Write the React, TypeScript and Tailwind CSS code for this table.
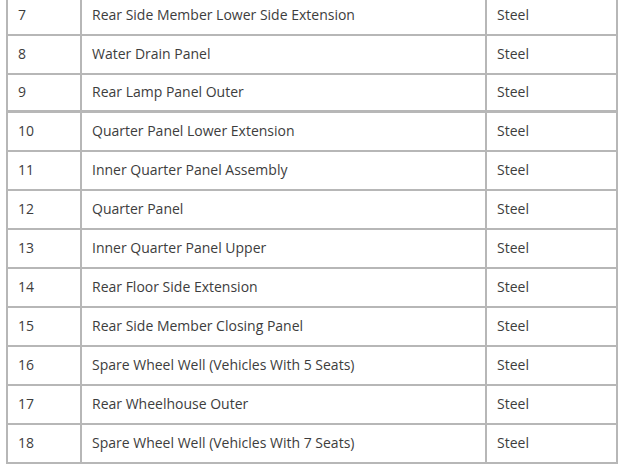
const rows: [string, string, string][] = [
  ['7', 'Rear Side Member Lower Side Extension', 'Steel'],
  ['8', 'Water Drain Panel', 'Steel'],
  ['9', 'Rear Lamp Panel Outer', 'Steel'],
  ['10', 'Quarter Panel Lower Extension', 'Steel'],
  ['11', 'Inner Quarter Panel Assembly', 'Steel'],
  ['12', 'Quarter Panel', 'Steel'],
  ['13', 'Inner Quarter Panel Upper', 'Steel'],
  ['14', 'Rear Floor Side Extension', 'Steel'],
  ['15', 'Rear Side Member Closing Panel', 'Steel'],
  ['16', 'Spare Wheel Well (Vehicles With 5 Seats)', 'Steel'],
  ['17', 'Rear Wheelhouse Outer', 'Steel'],
  ['18', 'Spare Wheel Well (Vehicles With 7 Seats)', 'Steel'],
]

export default function App() {
  return (
    <div className="w-[619px] h-[464px] overflow-hidden bg-white">
      <div
        className="ml-[6px] w-[612px] -mt-[3px] border-x-2 border-[#b7b7b7] text-[14px] text-[#3d3d3d]"
        style={{ fontFamily: '"Open Sans", "Noto Sans", sans-serif' }}
      >
        {rows.map(([no, part, material]) => (
          <div
            key={no}
            className={`flex border-[#b7b7b7] ${no === '9' ? 'h-[38px] border-b-[3px]' : 'h-[39px] border-b-2'}`}
          >
            <div className="w-[74px] shrink-0 flex items-center pl-[10px] pb-[2px] border-r-2 border-[#b7b7b7]">{no}</div>
            <div className="w-[405px] shrink-0 flex items-center pl-[10px] pb-[2px] border-r-2 border-[#b7b7b7]">{part}</div>
            <div className="flex-1 flex items-center pl-[10px] pb-[2px]">{material}</div>
          </div>
        ))}
      </div>
    </div>
  )
}
